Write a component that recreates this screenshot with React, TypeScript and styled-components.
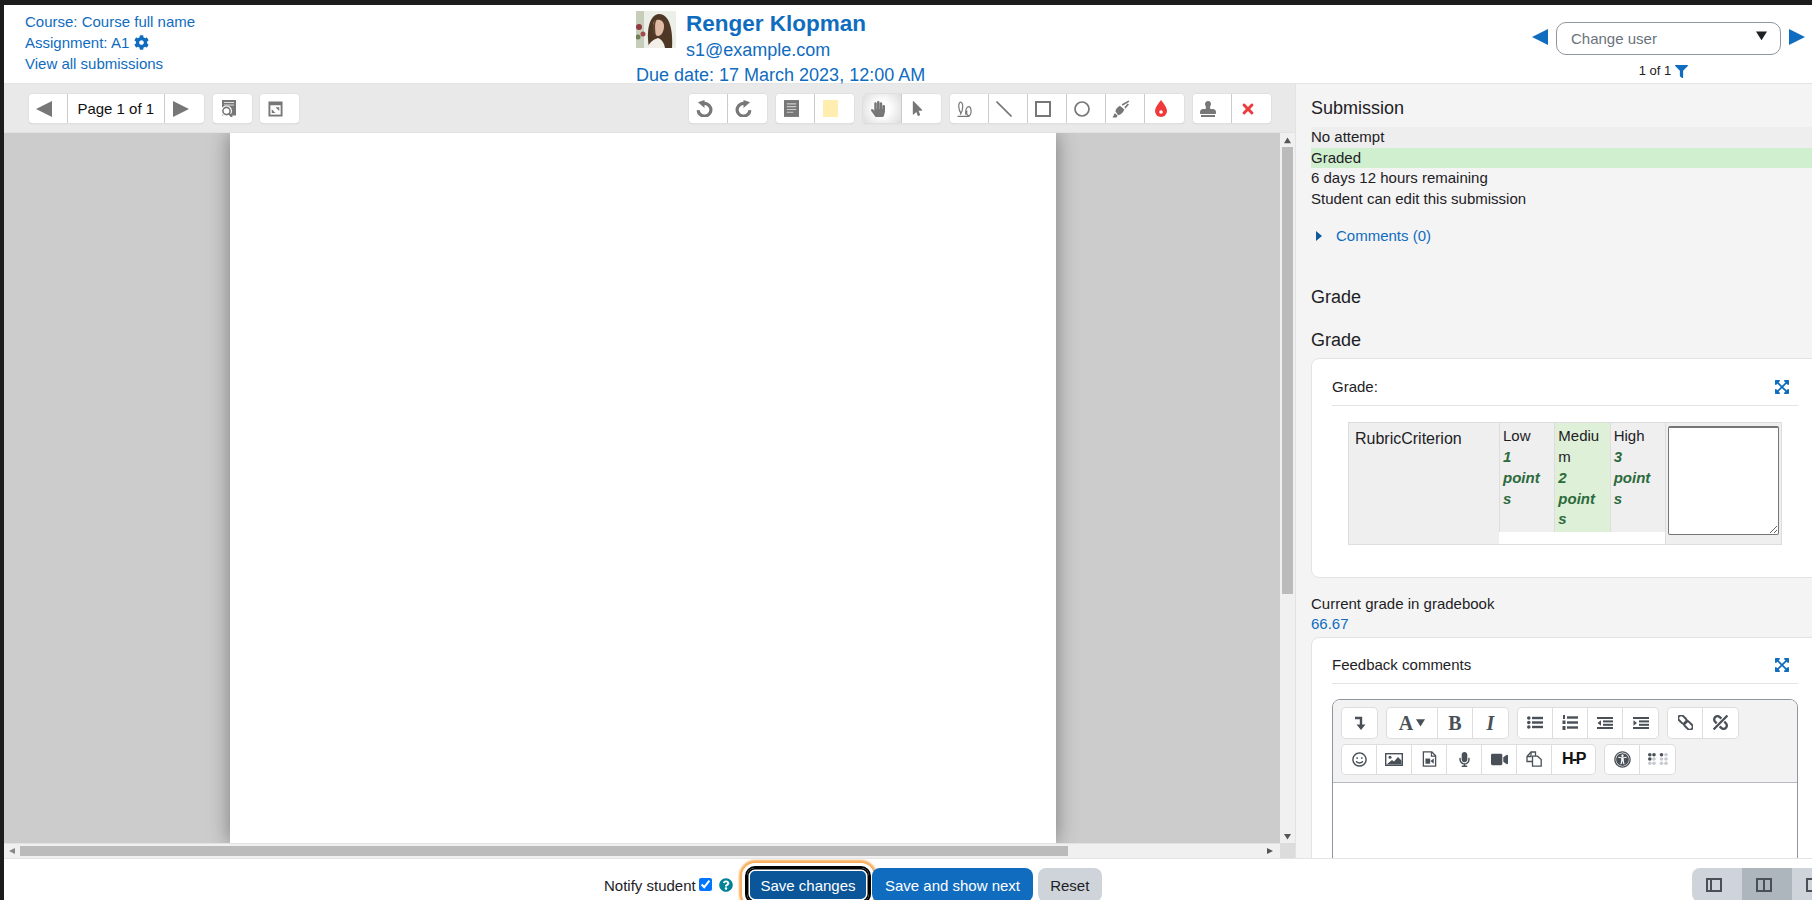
import React from 'react';
import styled, {createGlobalStyle} from 'styled-components';
import {
    FaCog, FaFilter, FaHandPaper, FaMousePointer, FaExpandArrowsAlt, FaUnlink, FaRegSmile, FaMicrophone, FaVideo,
    FaUniversalAccess, FaQuestionCircle, FaStamp, FaTimes,
} from 'react-icons/fa';

const GlobalStyle = createGlobalStyle`
    html, body {
        margin: 0;
        padding: 0;
        background: #1c1c1c;
    }
    * {
        box-sizing: border-box;
    }
`

const Triangle = ({dir, size = 16, color = '#0f6cbf'}: {dir: 'left' | 'right' | 'down'; size?: number; color?: string}) => {
    const points = dir === 'left' ? '16,0 16,16 0,8' : dir === 'right' ? '0,0 0,16 16,8' : '0,2 16,2 8,15'
    return (
        <svg width={size} height={size} viewBox="0 0 16 16"><polygon points={points} fill={color}/></svg>
    )
}

const Caret = () => (
    <svg width="6" height="10" viewBox="0 0 6 10"><polygon points="0,0 6,5 0,10" fill="#0f5a9e"/></svg>
)

const Avatar = () => (
    <svg width="40" height="37" viewBox="0 0 40 37">
        <rect width="40" height="37" fill="#eceee8"/>
        <rect x="0" y="0" width="8" height="37" fill="#c6cdbb"/>
        <circle cx="3" cy="16" r="3" fill="#8f3a3f"/>
        <circle cx="7" cy="23" r="2.5" fill="#a44a4a"/>
        <circle cx="2" cy="26" r="2.5" fill="#6f7f58"/>
        <path d="M13 37 C10 20 13 4 23 3 C34 3 37 20 36 37 Z" fill="#4f3726"/>
        <path d="M17 13 C18 7 28 7 28 15 C28 21 25 25 22 25 C19 25 16.5 19 17 13 Z" fill="#e0bca6"/>
        <path d="M17 22 C16 16 17 9 22 7 C18 11 19 17 20 26 Z" fill="#5d4130"/>
        <path d="M11 37 C14 30 19 28 22 27 C25 28 28 31 29 37 Z" fill="#f2eee8"/>
    </svg>
)

const UndoIcon = ({flip}: {flip?: boolean}) => (
    <svg width="17" height="17" viewBox="0 0 16 16" style={flip ? {transform: 'scaleX(-1)'} : undefined}>
        <path d="M5.4 3.8 A6 6 0 1 1 2 9.5" fill="none" stroke="#777" strokeWidth="3"/>
        <polygon points="8,0 8,7.5 1.8,2.2" fill="#777"/>
    </svg>
)

const SearchDocIcon = () => (
    <svg width="15" height="17" viewBox="0 0 15 17">
        <rect x="1" y="0" width="14" height="15.5" fill="#777"/>
        <path d="M3 2.5 H13 M3 5 H13" stroke="#ddd" strokeWidth="1"/>
        <circle cx="5.5" cy="11" r="5.5" fill="#fff"/>
        <circle cx="5.5" cy="11" r="3.6" fill="#fff" stroke="#777" strokeWidth="1.6"/>
        <path d="M8 13.5 L11 17" stroke="#777" strokeWidth="2"/>
    </svg>
)

const ExpandDocIcon = () => (
    <svg width="15" height="16" viewBox="0 0 16 17">
        <rect x="0.5" y="0.5" width="15" height="16" fill="#777"/>
        <rect x="2.5" y="4.5" width="11" height="10" fill="#fff"/>
        <path d="M8 6.5 H12 V10.5 Z M8 12.8 H4 V8.8 Z" fill="#777"/>
    </svg>
)

const CommentIcon = () => (
    <svg width="15" height="17" viewBox="0 0 16 18">
        <rect width="16" height="18" fill="#777"/>
        <path d="M3 4 H13 M3 7 H13 M3 10 H13 M3 13 H10" stroke="#ccc" strokeWidth="1.2"/>
    </svg>
)

const PenIcon = () => (
    <svg width="16" height="16" viewBox="0 0 16 16">
        <path d="M4.4 13 C1 9 1 1.2 3.6 1.2 C6.4 1.2 6.6 9 3.2 13.6 M8.6 13.6 C8.6 9 9.4 5.6 11.5 5.6 C14.8 5.6 15 14.4 11.7 14.6 C9.8 14.6 9.2 12 10 9.6"
              fill="none" stroke="#777" strokeWidth="1.2"/>
        <path d="M0.5 15.4 H12.5" stroke="#777" strokeWidth="1.2"/>
    </svg>
)

const LineIcon = () => (
    <svg width="16" height="16" viewBox="0 0 16 16"><path d="M0.5 0.5 L15.5 15.5" stroke="#777" strokeWidth="1.6"/></svg>
)

const RectIcon = () => (
    <svg width="16" height="16" viewBox="0 0 16 16">
        <rect x="1" y="1" width="14" height="14" fill="none" stroke="#777" strokeWidth="2"/>
    </svg>
)

const OvalIcon = () => (
    <svg width="16" height="16" viewBox="0 0 16 16">
        <circle cx="8" cy="8" r="7" fill="none" stroke="#777" strokeWidth="1.7"/>
    </svg>
)

const HighlightIcon = () => (
    <svg width="18" height="18" viewBox="0 0 16 16">
        <path d="M0.5 15.5 L2.5 11.5 L5 14 L4 15.5 Z" fill="#777"/>
        <path d="M3 10 C3.5 7.5 5 6 7 5 L11 8.5 C10 11 8 13 5.5 13.5 Z" fill="#777"/>
        <path d="M9 4.5 L15 1 M11.5 7 L14.5 3.5" stroke="#777" strokeWidth="1.5" fill="none"/>
    </svg>
)

const DropIcon = () => (
    <svg width="14" height="17" viewBox="0 0 14 17">
        <path d="M7 0 C7 0 13 7 13 11 A6 6 0 0 1 1 11 C1 7 7 0 7 0 Z" fill="#ee3a3a"/>
        <circle cx="7" cy="12" r="1.8" fill="#fff"/>
    </svg>
)

const CollapseIcon = () => (
    <svg width="12" height="14" viewBox="0 0 12 14">
        <path d="M1 2 H7 V9" fill="none" stroke="#495057" strokeWidth="2.4"/>
        <polygon points="2.5,8.5 11.5,8.5 7,14" fill="#495057"/>
    </svg>
)

const BulletsIcon = () => (
    <svg width="16" height="13" viewBox="0 0 16 13" fill="#495057">
        <circle cx="1.8" cy="2" r="1.8"/><circle cx="1.8" cy="6.5" r="1.8"/><circle cx="1.8" cy="11" r="1.8"/>
        <rect x="5" y="0.8" width="11" height="2.4"/><rect x="5" y="5.3" width="11" height="2.4"/><rect x="5" y="9.8" width="11" height="2.4"/>
    </svg>
)

const NumbersIcon = () => (
    <svg width="16" height="15" viewBox="0 0 16 15" fill="#495057">
        <rect x="1" y="0" width="2" height="4"/><rect x="0.5" y="5.5" width="3" height="3.5"/><rect x="0.5" y="11" width="3" height="4"/>
        <rect x="5" y="1.3" width="11" height="2.4"/><rect x="5" y="6.3" width="11" height="2.4"/><rect x="5" y="11.3" width="11" height="2.4"/>
    </svg>
)

const IndentIcon = ({out}: {out?: boolean}) => (
    <svg width="16" height="12" viewBox="0 0 16 12" fill="#495057">
        <rect x="0" y="0" width="16" height="2"/>
        <rect x="6" y="3.4" width="10" height="2"/>
        <rect x="6" y="6.8" width="10" height="2"/>
        <rect x="0" y="10" width="16" height="2"/>
        <polygon points={out ? '4,3.2 4,8.8 0.5,6' : '0.5,3.2 0.5,8.8 4,6'}/>
    </svg>
)

const LinkIcon = () => (
    <svg width="15" height="15" viewBox="0 0 15 15">
        <g fill="none" stroke="#495057" strokeWidth="2" transform="rotate(45 7.5 7.5)">
            <rect x="-1.5" y="4.6" width="9.5" height="5.8" rx="2.9"/>
            <rect x="7" y="4.6" width="9.5" height="5.8" rx="2.9"/>
        </g>
    </svg>
)

const CopyIcon = () => (
    <svg width="16" height="16" viewBox="0 0 16 16" fill="none" stroke="#495057" strokeWidth="1.3">
        <path d="M6.5 10.5 H1 V5.5 L5 1 H9.5 V5"/>
        <path d="M5 1 V5.5 H1"/>
        <path d="M6.5 15.2 V5.2 H11.5 L15.2 8.6 V15.2 Z" fill="#fff"/>
    </svg>
)

const ImageIcon = () => (
    <svg width="18" height="13" viewBox="0 0 18 13">
        <rect x="0.7" y="0.7" width="16.6" height="11.6" fill="#fff" stroke="#495057" strokeWidth="1.4"/>
        <circle cx="5" cy="4.2" r="1.5" fill="#495057"/>
        <path d="M1.5 11.5 L7 7 L9 8.5 L13 4 L16.5 7.5 V11.5 Z" fill="#495057"/>
    </svg>
)

const MediaIcon = () => (
    <svg width="15" height="16" viewBox="0 0 15 17">
        <path d="M1 1 H10 L14 5 V16 H1 Z" fill="#fff" stroke="#495057" strokeWidth="1.4"/>
        <path d="M9.5 1 V5.5 H14" fill="none" stroke="#495057" strokeWidth="1.2"/>
        <rect x="3.2" y="8" width="5" height="5.5" fill="#495057"/>
        <polygon points="8.5,10.5 12,8 12,13.5" fill="#495057"/>
    </svg>
)

const BrailleIcon = () => (
    <svg width="20" height="12" viewBox="0 0 20 12">
        {[0, 1, 2].map(r => [1.8, 6, 13.5, 18].map(x => {
            const dark = (r === 0 && x !== 18) || (r === 1 && x === 1.8)
            return <circle key={`${r}-${x}`} cx={x} cy={1.8 + r * 4.2} r="1.8" fill={dark ? '#495057' : '#c6cad0'}/>
        }))}
    </svg>
)

const LayoutIcon = ({variant}: {variant: 'left' | 'both' | 'right'}) => (
    <svg width="16" height="14" viewBox="0 0 16 14">
        <rect x="1" y="1" width="14" height="12" fill="none" stroke="#495057" strokeWidth="2"/>
        {variant !== 'right' && <path d={variant === 'left' ? 'M5 1 V13' : 'M8 1 V13'} stroke="#495057" strokeWidth="2"/>}
    </svg>
)

const drawItems = [
    <PenIcon/>,
    <LineIcon/>,
    <RectIcon/>,
    <OvalIcon/>,
    <HighlightIcon/>,
    <DropIcon/>,
]

export default function App() {
    return (
        <Screen>
            <GlobalStyle/>
            <Page>
                <Header>
                    <CourseLinks>
                        <LinkLine>Course: Course full name</LinkLine>
                        <LinkLine>Assignment: A1 <FaCog size={15} style={{verticalAlign: '-2px', marginLeft: 1}}/></LinkLine>
                        <LinkLine>View all submissions</LinkLine>
                    </CourseLinks>
                    <UserBlock>
                        <UserRow>
                            <Avatar/>
                            <UserText>
                                <UserName>Renger Klopman</UserName>
                                <UserEmail>s1@example.com</UserEmail>
                            </UserText>
                        </UserRow>
                        <DueDate>Due date: 17 March 2023, 12:00 AM</DueDate>
                    </UserBlock>
                    <UserPicker>
                        <PickerRow>
                            <PickerArrow><Triangle dir="left"/></PickerArrow>
                            <PickerBox>
                                Change user
                                <PickerCaret><Triangle dir="down" size={11} color="#1d2125"/></PickerCaret>
                            </PickerBox>
                            <PickerArrow><Triangle dir="right"/></PickerArrow>
                        </PickerRow>
                        <PickerCount>1 of 1 <FaFilter size={13} color="#0f6cbf" style={{marginLeft: 4}}/></PickerCount>
                    </UserPicker>
                </Header>
                <Main>
                    <ViewerColumn>
                        <ViewerToolbar>
                            <ToolGroup>
                                <ToolButton><Triangle dir="left" size={16} color="#777"/></ToolButton>
                                <PageLabel>Page 1 of 1</PageLabel>
                                <ToolButton><Triangle dir="right" size={16} color="#777"/></ToolButton>
                            </ToolGroup>
                            <ToolGroup><ToolButton><SearchDocIcon/></ToolButton></ToolGroup>
                            <ToolGroup><ToolButton><ExpandDocIcon/></ToolButton></ToolGroup>
                            <RightTools>
                                <ToolGroup>
                                    <ToolButton><UndoIcon/></ToolButton>
                                    <ToolButton><UndoIcon flip/></ToolButton>
                                </ToolGroup>
                                <ToolGroup>
                                    <ToolButton><CommentIcon/></ToolButton>
                                    <ToolButton><Swatch/></ToolButton>
                                </ToolGroup>
                                <ToolGroup>
                                    <ToolButton $active><FaHandPaper size={16} color="#777"/></ToolButton>
                                    <ToolButton><FaMousePointer size={15} color="#777"/></ToolButton>
                                </ToolGroup>
                                <ToolGroup>
                                    {drawItems.map((icon, i) => <ToolButton key={i}>{icon}</ToolButton>)}
                                </ToolGroup>
                                <ToolGroup>
                                    <ToolButton><FaStamp size={16} color="#777"/></ToolButton>
                                    <ToolButton><FaTimes size={16} color="#ee3a3a"/></ToolButton>
                                </ToolGroup>
                            </RightTools>
                        </ViewerToolbar>
                        <ViewerBody>
                            <Canvas>
                                <PdfPage/>
                            </Canvas>
                            <VScroll>
                                <ScrollArrow><Triangle dir="down" size={7} color="#555"/></ScrollArrow>
                                <VThumb/>
                                <ScrollArrow><Triangle dir="down" size={7} color="#555"/></ScrollArrow>
                            </VScroll>
                            <HScroll>
                                <HArrow><Triangle dir="left" size={6} color="#888"/></HArrow>
                                <HThumb/>
                                <HArrow><Triangle dir="right" size={6} color="#555"/></HArrow>
                            </HScroll>
                            <ScrollCorner/>
                        </ViewerBody>
                    </ViewerColumn>
                    <SidePanel>
                        <PanelHeading $top={13}>Submission</PanelHeading>
                        <StatusList>
                            <StatusRow $bg="#eeeeee">No attempt</StatusRow>
                            <StatusRow $bg="#cfefcf">Graded</StatusRow>
                            <StatusRow>6 days 12 hours remaining</StatusRow>
                            <StatusRow>Student can edit this submission</StatusRow>
                        </StatusList>
                        <CommentsLine>
                            <Caret/>
                            <span>Comments (0)</span>
                        </CommentsLine>
                        <PanelHeading $top={40}>Grade</PanelHeading>
                        <PanelHeading $top={21}>Grade</PanelHeading>
                        <Card $top={7} $bottom={32}>
                            <CardTitle $h={30}>
                                Grade:
                                <FaExpandArrowsAlt size={16} color="#0f6cbf"/>
                            </CardTitle>
                            <RubricRow>
                                <CriterionCell>RubricCriterion</CriterionCell>
                                <LevelsCell>
                                    <Level>Low<LevelPoints>1 points</LevelPoints></Level>
                                    <Level $selected>Medium<LevelPoints>2 points</LevelPoints></Level>
                                    <Level>High<LevelPoints>3 points</LevelPoints></Level>
                                </LevelsCell>
                                <RemarkCell>
                                    <RemarkInput/>
                                </RemarkCell>
                            </RubricRow>
                        </Card>
                        <GradeLabel>Current grade in gradebook</GradeLabel>
                        <GradeValue>66.67</GradeValue>
                        <Card $top={2} $bottom={32}>
                            <CardTitle $h={29}>
                                Feedback comments
                                <FaExpandArrowsAlt size={16} color="#0f6cbf"/>
                            </CardTitle>
                            <Editor>
                                <EditorTools>
                                    <EditorRow $h={30}>
                                        <AttoGroup>
                                            <AttoButton><CollapseIcon/></AttoButton>
                                        </AttoGroup>
                                        <AttoGroup>
                                            <AttoButton $w={51}><SerifGlyph>A</SerifGlyph><Triangle dir="down" size={9} color="#495057"/></AttoButton>
                                            <AttoButton><SerifGlyph>B</SerifGlyph></AttoButton>
                                            <AttoButton><SerifGlyph $italic>I</SerifGlyph></AttoButton>
                                        </AttoGroup>
                                        <AttoGroup>
                                            <AttoButton><BulletsIcon/></AttoButton>
                                            <AttoButton><NumbersIcon/></AttoButton>
                                            <AttoButton><IndentIcon out/></AttoButton>
                                            <AttoButton><IndentIcon/></AttoButton>
                                        </AttoGroup>
                                        <AttoGroup>
                                            <AttoButton><LinkIcon/></AttoButton>
                                            <AttoButton><FaUnlink size={15} style={{transform: 'scaleX(-1)'}}/></AttoButton>
                                        </AttoGroup>
                                    </EditorRow>
                                    <EditorRow $h={29}>
                                        <AttoGroup>
                                            <AttoButton><FaRegSmile size={15}/></AttoButton>
                                            <AttoButton><ImageIcon/></AttoButton>
                                            <AttoButton><MediaIcon/></AttoButton>
                                            <AttoButton><FaMicrophone size={15}/></AttoButton>
                                            <AttoButton><FaVideo size={17}/></AttoButton>
                                            <AttoButton><CopyIcon/></AttoButton>
                                            <AttoButton $w={43}><H5PMark>H-P</H5PMark></AttoButton>
                                        </AttoGroup>
                                        <AttoGroup>
                                            <AttoButton><FaUniversalAccess size={17}/></AttoButton>
                                            <AttoButton><BrailleIcon/></AttoButton>
                                        </AttoGroup>
                                    </EditorRow>
                                </EditorTools>
                                <EditorArea/>
                            </Editor>
                        </Card>
                    </SidePanel>
                </Main>
                <Footer>
                    <NotifyLabel>
                        Notify student
                        <NotifyBox type="checkbox" defaultChecked/>
                        <FaQuestionCircle size={14} color="#008196"/>
                    </NotifyLabel>
                    <SaveButton>Save changes</SaveButton>
                    <PrimaryButton>Save and show next</PrimaryButton>
                    <ResetButton>Reset</ResetButton>
                    <LayoutGroup>
                        <LayoutButton><LayoutIcon variant="left"/></LayoutButton>
                        <LayoutButton $active><LayoutIcon variant="both"/></LayoutButton>
                        <LayoutButton><LayoutIcon variant="right"/></LayoutButton>
                    </LayoutGroup>
                </Footer>
            </Page>
        </Screen>
    );
};

const Screen = styled.div`
    width: 1812px;
    height: 900px;
    padding: 5px 0 0 4px;
    background: #1c1c1c;
    overflow: hidden;
    font-family: "Liberation Sans", Arial, sans-serif;
    font-size: 15px;
    color: #1d2125;
`

const Page = styled.div`
    display: flex;
    flex-direction: column;
    height: 895px;
    background: #fff;
`

const Header = styled.header`
    display: grid;
    grid-template-columns: 632px 1fr auto;
    height: 79px;
    flex: none;
    border-bottom: 1px solid #e4e4e4;
`

const CourseLinks = styled.div`
    padding: 6px 0 0 21px;
`

const LinkLine = styled.div`
    color: #0f6cbf;
    line-height: 21px;
`

const UserBlock = styled.div`
    padding-top: 6px;
    color: #0f6cbf;
`

const UserRow = styled.div`
    display: flex;
    gap: 10px;
`

const UserText = styled.div`
    display: flex;
    flex-direction: column;
`

const UserName = styled.div`
    font-size: 22.5px;
    font-weight: 700;
    line-height: 26px;
`

const UserEmail = styled.div`
    font-size: 18px;
    line-height: 24px;
    margin-top: 1px;
`

const DueDate = styled.div`
    font-size: 18px;
    line-height: 22px;
    margin-top: 2px;
`

const UserPicker = styled.div`
    padding: 17px 7px 0 0;
    display: flex;
    flex-direction: column;
    align-items: center;
`

const PickerRow = styled.div`
    display: flex;
    align-items: center;
    gap: 8px;
`

const PickerArrow = styled.span`
    display: flex;
    margin-bottom: 4px;
`

const PickerBox = styled.div`
    width: 225px;
    height: 33px;
    padding: 0 14px;
    display: flex;
    align-items: center;
    justify-content: space-between;
    border: 1px solid #8f959e;
    border-radius: 10px;
    color: #6a737b;
    background: #fff;
`

const PickerCaret = styled.span`
    display: flex;
    margin: 0 -1px 6px 0;
`

const PickerCount = styled.div`
    display: flex;
    align-items: center;
    margin-top: 8px;
    padding-right: 10px;
    font-size: 13px;
    line-height: 16px;
`

const Main = styled.div`
    display: flex;
    height: 774px;
    flex: none;
`

const ViewerColumn = styled.div`
    display: flex;
    flex-direction: column;
    width: 1291px;
    flex: none;
`

const ViewerToolbar = styled.div`
    display: flex;
    align-items: flex-start;
    gap: 8.5px;
    height: 49px;
    flex: none;
    padding: 10px 24px 0 24.5px;
    background: #e9e9e9;
    border-bottom: 1px solid #e2e2e2;
`

const RightTools = styled.div`
    display: flex;
    gap: 9px;
    margin-left: auto;
`

const ToolGroup = styled.div`
    display: flex;
    height: 29px;
    background: #fff;
    border-radius: 4px;
    box-shadow: 0 0 0 1px #e0e0e0, 0 1px 1px #bbb;
    overflow: hidden;
`

const ToolButton = styled.div<{$active?: boolean}>`
    width: 39px;
    display: flex;
    align-items: center;
    justify-content: center;
    padding-right: 8px;
    border-right: 1px solid #ccc;
    background: ${p => p.$active ? 'radial-gradient(circle, #fff 30%, #dcdcdc 100%)' : '#fff'};

    &:last-child {
        border-right: none;
    }
`

const PageLabel = styled.div`
    width: 97.5px;
    display: flex;
    align-items: center;
    justify-content: center;
    border-right: 1px solid #ccc;
    font-size: 15px;
    color: #111;
`

const Swatch = styled.div`
    width: 15px;
    height: 17px;
    background: #ffeeb0;
`

const ViewerBody = styled.div`
    flex: 1;
    display: grid;
    grid-template-columns: 1fr 15px;
    grid-template-rows: 710px 15px;
    min-height: 0;
`

const Canvas = styled.div`
    background: #cccccc;
    overflow: hidden;
    padding-left: 226px;
`

const PdfPage = styled.div`
    width: 826px;
    height: 710px;
    background: #fff;
    box-shadow: 0 0 20px rgba(0, 0, 0, 0.4);
`

const VScroll = styled.div`
    display: flex;
    flex-direction: column;
    align-items: center;
    background: #f0f0f0;
`

const ScrollArrow = styled.div`
    height: 14px;
    flex: none;
    display: flex;
    align-items: center;
    justify-content: center;

    &:first-child svg {
        transform: rotate(180deg);
    }
`

const VThumb = styled.div`
    width: 11px;
    height: 447px;
    background: #bbbbbb;
    margin-bottom: auto;
`

const HScroll = styled.div`
    display: flex;
    align-items: center;
    background: #f0f0f0;
    padding: 0 2px 0 0;
    border-top: 1px solid #e2e2e2;
`

const HArrow = styled.div`
    width: 16px;
    flex: none;
    display: flex;
    justify-content: center;

    &:last-child {
        margin-left: auto;
    }
`

const HThumb = styled.div`
    width: 1048px;
    height: 10px;
    background: #bbbbbb;
`

const ScrollCorner = styled.div`
    background: #dcdcdc;
`

const SidePanel = styled.aside`
    flex: 1;
    min-width: 0;
    padding-left: 15px;
    background: #f4f4f4;
    border-left: 1px solid #e2e2e2;
    overflow: hidden;
    line-height: 20.7px;
`

const PanelHeading = styled.h4<{$top: number}>`
    margin: ${p => p.$top}px 0 0;
    font-size: 18px;
    font-weight: 400;
    line-height: 22px;
`

const StatusList = styled.div`
    margin-top: 8px;
`

const StatusRow = styled.div<{$bg?: string}>`
    height: 20.7px;
    background: ${p => p.$bg || 'transparent'};
`

const CommentsLine = styled.div`
    display: flex;
    align-items: center;
    gap: 14px;
    margin-top: 16px;
    padding-left: 5px;
    color: #0f6cbf;
`

const Card = styled.div<{$top: number; $bottom: number}>`
    margin: ${p => p.$top}px -10px 0 0;
    padding: 17px 23px ${p => p.$bottom}px 20px;
    background: #fff;
    border: 1px solid #e3e3e3;
    border-radius: 8px;
`

const CardTitle = styled.div<{$h: number}>`
    display: flex;
    align-items: center;
    justify-content: space-between;
    height: ${p => p.$h}px;
    padding: 0 8px 8px 0;
    border-bottom: 1px solid #e3e3e3;
`

const RubricRow = styled.div`
    display: grid;
    grid-template-columns: 150px 166px 1fr;
    margin: 16px 16px 0;
    height: 123px;
    background: #efefef;
    border: 1px solid #ddd;
`

const CriterionCell = styled.div`
    padding: 6px;
    font-size: 16px;
`

const LevelsCell = styled.div`
    display: grid;
    grid-template-columns: repeat(3, 1fr);
    align-items: start;
    background: #fff;
`

const Level = styled.div<{$selected?: boolean}>`
    height: 109px;
    padding: 3px 8px 3px 3px;
    overflow-wrap: anywhere;
    background: ${p => p.$selected ? '#dff0d8' : '#efefef'};
    border-left: 1px solid #ddd;
`

const LevelPoints = styled.div`
    font-weight: 700;
    font-style: italic;
    color: #2c6a3c;
`

const RemarkCell = styled.div`
    padding: 3px 2px 0;
    border-left: 1px solid #ddd;
`

const RemarkInput = styled.textarea`
    display: block;
    width: 111px;
    height: 109px;
    padding: 0;
    border: 1px solid #767676;
    border-top-width: 2px;
    border-radius: 2px;
    background: #fff;
`

const GradeLabel = styled.div`
    margin-top: 16px;
`

const GradeValue = styled.div`
    margin-top: -1px;
    color: #0f6cbf;
`

const Editor = styled.div`
    margin-top: 15px;
    border: 1px solid #8f959e;
    border-radius: 8px 8px 0 0;
    overflow: hidden;
`

const EditorTools = styled.div`
    display: flex;
    flex-direction: column;
    gap: 7px;
    padding: 8px 9px;
    background: #f2f2f2;
    border-bottom: 1px solid #b8bcc2;
`

const EditorRow = styled.div<{$h: number}>`
    display: flex;
    gap: 10px;
    height: ${p => p.$h}px;
`

const AttoGroup = styled.div`
    display: flex;
    background: #fff;
    border-radius: 4px;
    box-shadow: 0 0 0 1px #ddd;
    overflow: hidden;
`

const AttoButton = styled.div<{$w?: number}>`
    width: ${p => p.$w || 35}px;
    display: flex;
    align-items: center;
    justify-content: center;
    gap: 3px;
    color: #495057;
    border-right: 1px solid #ddd;

    &:last-child {
        border-right: none;
    }
`

const SerifGlyph = styled.span<{$italic?: boolean}>`
    font-family: "Liberation Serif", "Times New Roman", serif;
    font-size: 20px;
    font-weight: 700;
    font-style: ${p => p.$italic ? 'italic' : 'normal'};
    color: #495057;
    line-height: 1;
`

const H5PMark = styled.span`
    font-size: 16px;
    font-weight: 700;
    letter-spacing: -1.5px;
    color: #111;
`

const EditorArea = styled.div`
    height: 120px;
    background: #fff;
`

const Footer = styled.footer`
    display: flex;
    align-items: flex-start;
    flex: 1;
    min-height: 0;
    padding: 9px 0 0 600px;
    background: #fff;
    border-top: 1px solid #e4e4e4;
    overflow: hidden;
`

const NotifyLabel = styled.label`
    display: flex;
    align-items: center;
    height: 34px;
    width: 143px;
    flex: none;
`

const NotifyBox = styled.input`
    width: 13px;
    height: 13px;
    margin: 0 7px 2px 3px;
`

const BaseButton = styled.button`
    height: 34px;
    flex: none;
    padding: 0 10px;
    border: none;
    border-radius: 8px;
    font-family: inherit;
    font-size: 15px;
    color: #fff;
`

const SaveButton = styled(BaseButton)`
    width: 122px;
    background: #0a5698;
    box-shadow:
        inset 0 0 0 1.5px #000,
        inset 0 0 0 3px #fff,
        0 0 0 2px #000,
        0 0 0 5px #fff,
        0 0 2px 8px #f9ae5e;
`

const PrimaryButton = styled(BaseButton)`
    position: relative;
    width: 161px;
    margin-left: 3px;
    background: #0f6cbf;
`

const ResetButton = styled(BaseButton)`
    width: 64.5px;
    margin-left: 4.5px;
    background: #ced4da;
    color: #1d2125;
`

const LayoutGroup = styled.div`
    display: flex;
    height: 34px;
    margin: 0 -30px 0 auto;
    border-radius: 8px;
    overflow: hidden;
`

const LayoutButton = styled.div<{$active?: boolean}>`
    width: 50px;
    display: flex;
    align-items: center;
    justify-content: center;
    padding-right: 7px;
    background: ${p => p.$active ? '#adb5bd' : '#ced4da'};
`
